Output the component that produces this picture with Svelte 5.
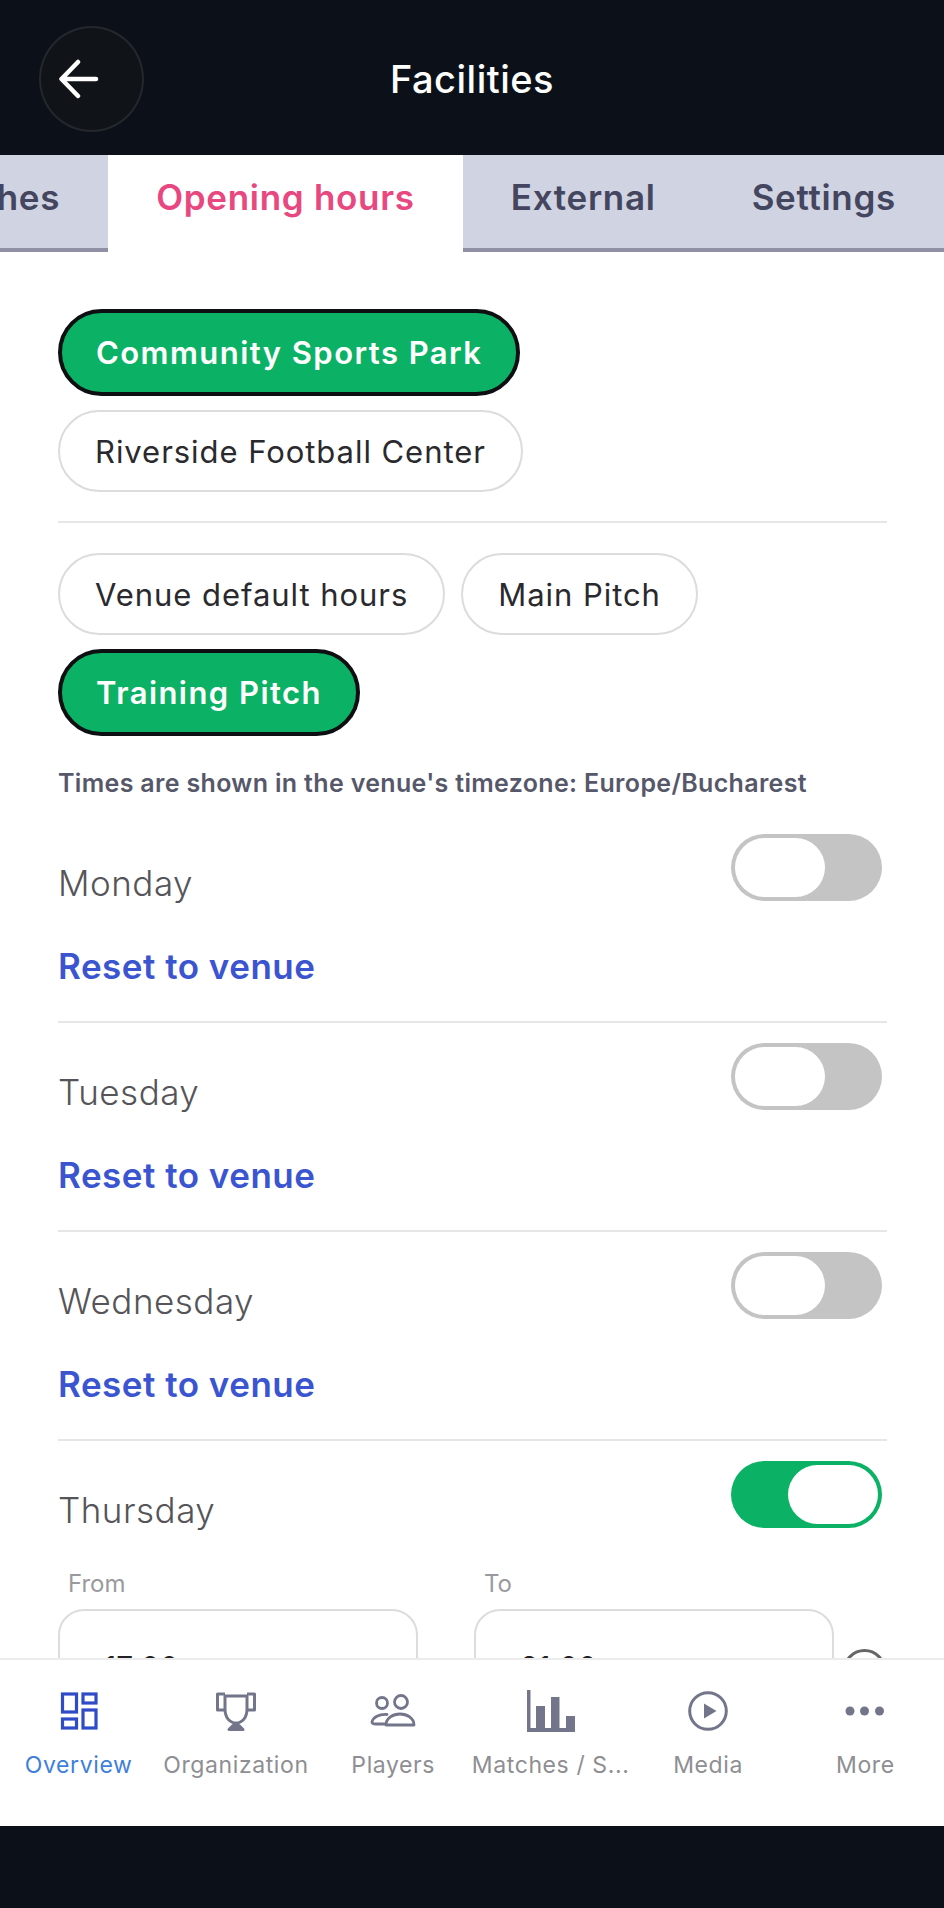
<script>
  const tabs = ['Matches', 'Opening hours', 'External', 'Settings'];
  const venues = [
    { name: 'Community Sports Park', on: true },
    { name: 'Riverside Football Center', on: false }
  ];
  const pitches = [
    { name: 'Venue default hours', on: false },
    { name: 'Main Pitch', on: false },
    { name: 'Training Pitch', on: true }
  ];
  const closedDays = ['Monday', 'Tuesday', 'Wednesday'];
  const navItems = ['Overview', 'Organization', 'Players', 'Matches / S...', 'Media', 'More'];
</script>

<div class="screen">
  <header class="topbar">
    <button class="back" aria-label="Back">
      <svg width="40" height="40" viewBox="0 0 40 40" fill="none" stroke="#fff" stroke-width="4.5" stroke-linecap="round" stroke-linejoin="round">
        <path d="M37 20H3M19 3 2.500 20 19 37" />
      </svg>
    </button>
    <h1>Facilities</h1>
  </header>

  <nav class="tabs">
    {#each tabs as tab}
      <div class="tab" class:active={tab === 'Opening hours'}>{tab}</div>
    {/each}
  </nav>

  <main class="content">
    <div class="chips stacked">
      {#each venues as v}
        <button class="chip" class:on={v.on}>{v.name}</button>
      {/each}
    </div>
    <hr class="first" />
    <div class="chips">
      {#each pitches as p}
        <button class="chip" class:on={p.on}>{p.name}</button>
      {/each}
    </div>
    <p class="tz">Times are shown in the venue's timezone: Europe/Bucharest</p>

    {#each closedDays as day, i}
      <section class="day" class:nudge={i === 0}>
        <div class="day-head">
          <span class="day-name">{day}</span>
          <span class="toggle"><span class="thumb"></span></span>
        </div>
        <div class="reset">Reset to venue</div>
      </section>
      <hr />
    {/each}

    <section class="day">
      <div class="day-head">
        <span class="day-name">Thursday</span>
        <span class="toggle checked"><span class="thumb"></span></span>
      </div>
      <div class="times">
        <div class="field">
          <label for="from">From</label>
          <div id="from" class="input">17:00</div>
        </div>
        <div class="field">
          <label for="to">To</label>
          <div id="to" class="input">21:00</div>
        </div>
        <span class="remove"></span>
      </div>
    </section>
  </main>

  <footer class="bottom-nav">
    {#each navItems as label, i}
      <div class="nav-item" class:current={i === 0}>
        <div class="nav-icon">
          {#if i === 0}
            <svg width="38" height="38" viewBox="0 0 38 38" fill="none" stroke="#2f4cc6" stroke-width="3.200">
              <rect x="2.500" y="2" width="14" height="18" /><rect x="23" y="2" width="13" height="9" />
              <rect x="2.500" y="27" width="14" height="9" /><rect x="23" y="18" width="13" height="18" />
            </svg>
          {:else if i === 1}
            <svg width="40" height="40" viewBox="0 0 40 40" fill="none" stroke="#73768a" stroke-width="3" stroke-linejoin="round">
              <path d="M9 5v13c0 9 5 14 11 14s11-5 11-14V5z" />
              <path d="M9 3H1.500v16H9M31 3h7.500v16H31" />
              <path d="M20 32v4" />
              <path d="M13 38.500h14l-4-4h-6z" fill="#73768a" />
            </svg>
          {:else if i === 2}
            <svg width="46" height="34" viewBox="0 0 46 34" fill="none" stroke="#73768a" stroke-width="2.800">
              <circle cx="12" cy="9" r="5.500" /><circle cx="31" cy="8" r="6.500" />
              <path d="M17 20.500C9 20 3 23 2 28c0 1.500 2 2 4 2h9" stroke-linecap="round" />
              <path d="M16 31c0-7 7-11 14-11s14 4 14 11z" stroke-linejoin="round" />
            </svg>
          {:else if i === 3}
            <svg width="48" height="42" viewBox="0 0 48 42" fill="#73768a">
              <rect x="0" y="0" width="3.500" height="42" /><rect x="0" y="38" width="48" height="4" />
              <rect x="9" y="16" width="9" height="24" /><rect x="24" y="7" width="8.500" height="33" /><rect x="39" y="26" width="9" height="14" />
            </svg>
          {:else if i === 4}
            <svg width="40" height="40" viewBox="0 0 40 40">
              <circle cx="20" cy="20" r="18.300" fill="none" stroke="#73768a" stroke-width="3" />
              <path d="M16 12.500 28.500 20 16 27.500z" fill="#73768a" />
            </svg>
          {:else}
            <svg width="40" height="10" viewBox="0 0 40 10" fill="#73768a">
              <circle cx="5" cy="5" r="4.500" /><circle cx="19.500" cy="5" r="4.500" /><circle cx="34.500" cy="5" r="4.500" />
            </svg>
          {/if}
        </div>
        <span class="nav-label">{label}</span>
      </div>
    {/each}
  </footer>

  <div class="home-bar"></div>
</div>

<style>
  :global(body) {
    margin: 0;
    background: #fff;
  }

  .screen {
    width: 944px;
    height: 1908px;
    display: flex;
    flex-direction: column;
    overflow: hidden;
    font-family: Inter, 'Noto Sans', sans-serif;
  }

  .topbar {
    height: 155px;
    flex-shrink: 0;
    background: #0c1119;
    display: flex;
    align-items: center;
    justify-content: center;
    position: relative;
  }

  .topbar h1 {
    margin: 0 0 -2px 0;
    color: #fff;
    font-size: 38px;
    font-weight: 500;
    letter-spacing: 0.5px;
  }

  .back {
    position: absolute;
    left: 39px;
    top: 26px;
    width: 105px;
    height: 106px;
    padding: 0 0 0 18px;
    border-radius: 50%;
    border: 2px solid #24272d;
    background: #101317;
    display: flex;
    align-items: center;
    justify-content: flex-start;
    box-sizing: border-box;
  }

  .tabs {
    height: 97px;
    flex-shrink: 0;
    display: flex;
    justify-content: flex-end;
    overflow: hidden;
  }

  .tab {
    flex-shrink: 0;
    padding: 0 48px;
    height: 97px;
    line-height: 84px;
    font-size: 35px;
    font-weight: 600;
    color: #44465f;
    background: #d0d3e1;
    border-bottom: 4px solid #8f90a3;
    letter-spacing: 0.7px;
    box-sizing: border-box;
  }

  .tab.active {
    background: #fff;
    color: #e8477f;
    border-bottom-color: #fff;
  }

  .content {
    flex: 1;
    min-height: 0;
    overflow: hidden;
    padding: 57px 57px 0 58px;
  }

  hr {
    margin: 0;
    border: none;
    height: 2px;
    background: #e6e6e8;
  }

  hr.first {
    margin: 29px 0 30px;
  }

  .chips {
    display: flex;
    flex-wrap: wrap;
    gap: 14px 16px;
  }

  .chips.stacked {
    flex-direction: column;
    align-items: flex-start;
  }

  .chip {
    height: 82px;
    padding: 0 35px;
    border: 2px solid #dcdcdf;
    border-radius: 41px;
    background: #fff;
    font-family: inherit;
    font-size: 31px;
    font-weight: 400;
    color: #2a2a2e;
    letter-spacing: 0.95px;
    box-sizing: border-box;
  }

  .chip.on {
    height: 87px;
    padding: 0 34px;
    border: 4px solid #0e0f12;
    border-radius: 44px;
    background: #0bb265;
    color: #fff;
    font-weight: 600;
    letter-spacing: 1.450px;
  }

  .tz {
    margin: 32px 0 0 0;
    height: 30px;
    line-height: 30px;
    font-size: 25px;
    font-weight: 600;
    color: #56586a;
    letter-spacing: 0.330px;
  }

  .day {
    padding-top: 20px;
  }

  .day.nudge {
    padding-top: 36px;
  }

  .day-head {
    display: flex;
    justify-content: space-between;
    align-items: flex-start;
    padding-right: 5px;
    height: 69px;
  }

  .day-name {
    margin-top: 29px;
    line-height: 40px;
    font-size: 35px;
    font-weight: 300;
    color: #555559;
    letter-spacing: 0.5px;
  }

  .toggle {
    width: 151px;
    height: 67px;
    border-radius: 34px;
    background: #c4c4c4;
    padding: 4px;
    box-sizing: border-box;
    display: flex;
  }

  .toggle.checked {
    background: #0bb265;
    justify-content: flex-end;
  }

  .thumb {
    width: 90px;
    height: 59px;
    background: #fff;
    border-radius: 30px;
  }

  .reset {
    margin: 43px 0 35px;
    line-height: 40px;
    font-size: 35px;
    font-weight: 600;
    color: #3b55d0;
    letter-spacing: 0.5px;
  }

  .times {
    margin-top: 39px;
    display: flex;
    gap: 56px;
    position: relative;
  }

  .field {
    width: 360px;
  }

  .field label {
    display: block;
    padding-left: 10px;
    height: 30px;
    line-height: 30px;
    margin-bottom: 10px;
    font-size: 24px;
    color: #9a9a9e;
  }

  .input {
    height: 110px;
    line-height: 112px;
    padding-left: 44px;
    border: 2px solid #dcdcdf;
    border-radius: 26px;
    font-size: 30px;
    color: #222;
    box-sizing: border-box;
  }

  .remove {
    position: absolute;
    left: 785px;
    top: 80px;
    width: 37px;
    height: 37px;
    border: 3px solid #666;
    border-radius: 50%;
  }

  .bottom-nav {
    height: 168px;
    flex-shrink: 0;
    display: grid;
    grid-template-columns: repeat(6, 1fr);
    background: #fff;
    border-top: 2px solid #ececee;
    box-sizing: border-box;
    position: relative;
  }

  .nav-item {
    display: flex;
    flex-direction: column;
    align-items: center;
  }

  .nav-icon {
    height: 42px;
    margin-top: 30px;
    display: flex;
    align-items: center;
    justify-content: center;
  }

  .nav-label {
    margin-top: 19px;
    font-size: 23px;
    line-height: 28px;
    color: #8e8e93;
    letter-spacing: 0.6px;
    white-space: nowrap;
  }

  .current .nav-label {
    color: #3f7fdc;
  }

  .home-bar {
    height: 82px;
    flex-shrink: 0;
    background: #0c1119;
  }
</style>
